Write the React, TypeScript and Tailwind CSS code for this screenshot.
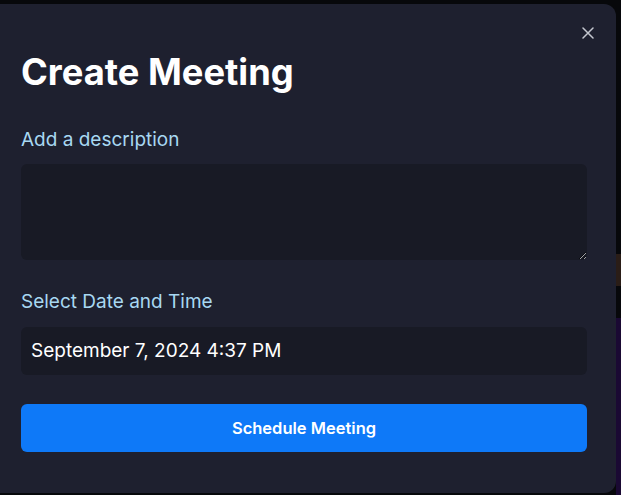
import React from "react";

export default function App() {
  return (
    <div className="w-[621px] h-[495px] bg-[#07080b] overflow-hidden flex" style={{ fontFamily: "Inter, 'Noto Sans', sans-serif" }}>
      <div className="mt-[4px] w-[616px] h-[489px] shrink-0 bg-[#1e202f] rounded-tr-[12px] rounded-br-[12px] pl-[21px] pr-[29px] flex flex-col relative">
        <button className="absolute right-[22px] top-[23px] w-[12px] h-[12px] text-[#c4c7cf]">
          <svg viewBox="0 0 12 12" width="12" height="12" fill="none" stroke="currentColor" strokeWidth="1.5" strokeLinecap="round">
            <path d="M1 1L11 11M11 1L1 11" />
          </svg>
        </button>
        <h1 className="mt-[48px] text-[36.3px] leading-[40px] font-bold text-white">Create Meeting</h1>
        <label className="mt-[34px] text-[19px] leading-[28px] text-[#a8d8f2]">Add a description</label>
        <textarea className="mt-[10px] h-[96px] w-full bg-[#181a25] rounded-[6px] outline-none text-white p-2 resize-y" />
        <label className="mt-[28px] text-[19px] leading-[28px] text-[#a8d8f2]">Select Date and Time</label>
        <div className="mt-[11px] h-[48px] w-full bg-[#181a25] rounded-[6px] flex items-center pl-[10px] text-[19px] text-white">
          September 7, 2024 4:37 PM
        </div>
        <button className="mt-[29px] h-[48px] w-full bg-[#0e79f8] rounded-[6px] text-white text-[16.5px] font-semibold">
          Schedule Meeting
        </button>
      </div>
      <div className="flex-1 flex flex-col">
        <div className="h-[254px]" />
        <div className="h-[32px] bg-[#2a1d17]" />
        <div className="h-[32px]" />
        <div className="flex-1 bg-[#1a0933]" />
      </div>
    </div>
  );
}
